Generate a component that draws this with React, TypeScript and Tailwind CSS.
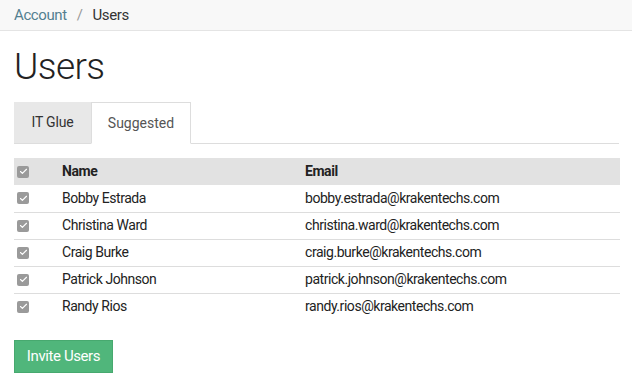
import { Check } from 'lucide-react'

const users = [
  { name: 'Bobby Estrada', email: 'bobby.estrada@krakentechs.com' },
  { name: 'Christina Ward', email: 'christina.ward@krakentechs.com' },
  { name: 'Craig Burke', email: 'craig.burke@krakentechs.com' },
  { name: 'Patrick Johnson', email: 'patrick.johnson@krakentechs.com' },
  { name: 'Randy Rios', email: 'randy.rios@krakentechs.com' },
]

function Checkbox() {
  return (
    <span className="flex h-[12px] w-[12px] items-center justify-center rounded-[2px] bg-[#9a9a9a]">
      <Check className="h-[9px] w-[9px] text-white" strokeWidth={3} />
    </span>
  )
}

export default function App() {
  return (
    <div className="min-h-screen bg-white font-['Roboto',sans-serif] text-[#222]">
      <div className="flex h-[31px] items-center border-b border-[#e4e4e4] bg-[#f8f8f8] px-[14px] text-[15px] tracking-[-0.4px]">
        <span className="text-[#537f90]">Account</span>
        <span className="mx-[10px] text-[#999]">/</span>
        <span className="text-[#333]">Users</span>
      </div>

      <div className="px-[14px]">
        <h1 className="mt-[14px] text-[37px] font-light leading-[44px] tracking-[-0.6px] text-[#222]">Users</h1>

        <div className="mt-[13px] flex h-[42px] w-[605px] border-b border-[#dddddd]">
          <div className="flex w-[77px] items-center justify-center bg-[#e8e8e8] text-[14px] tracking-[-0.2px] text-[#333]">IT Glue</div>
          <div className="-mb-px flex w-[100px] items-center justify-center border border-b-white border-[#dddddd] bg-white text-[14px] text-[#555]">
            Suggested
          </div>
        </div>

        <table className="mt-[14px] w-[606px] border-collapse text-[14px] tracking-[-0.45px]">
          <thead>
            <tr className="h-[27px] bg-[#e2e2e2]">
              <th className="w-[48px] pl-[3px] text-left align-middle"><Checkbox /></th>
              <th className="w-[243px] text-left font-bold">Name</th>
              <th className="text-left font-bold">Email</th>
            </tr>
          </thead>
          <tbody>
            {users.map((u, i) => (
              <tr key={u.email} className={i > 0 ? 'h-[27px] border-t border-[#dddddd]' : 'h-[27px]'}>
                <td className="pl-[3px] align-middle"><Checkbox /></td>
                <td>{u.name}</td>
                <td>{u.email}</td>
              </tr>
            ))}
          </tbody>
        </table>

        <button
          type="button"
          className="mt-[20px] flex h-[33px] w-[99px] items-center justify-center border border-[#47a96f] bg-[#50b67b] text-[15px] tracking-[-0.4px] text-white"
        >
          Invite Users
        </button>
      </div>
    </div>
  )
}
